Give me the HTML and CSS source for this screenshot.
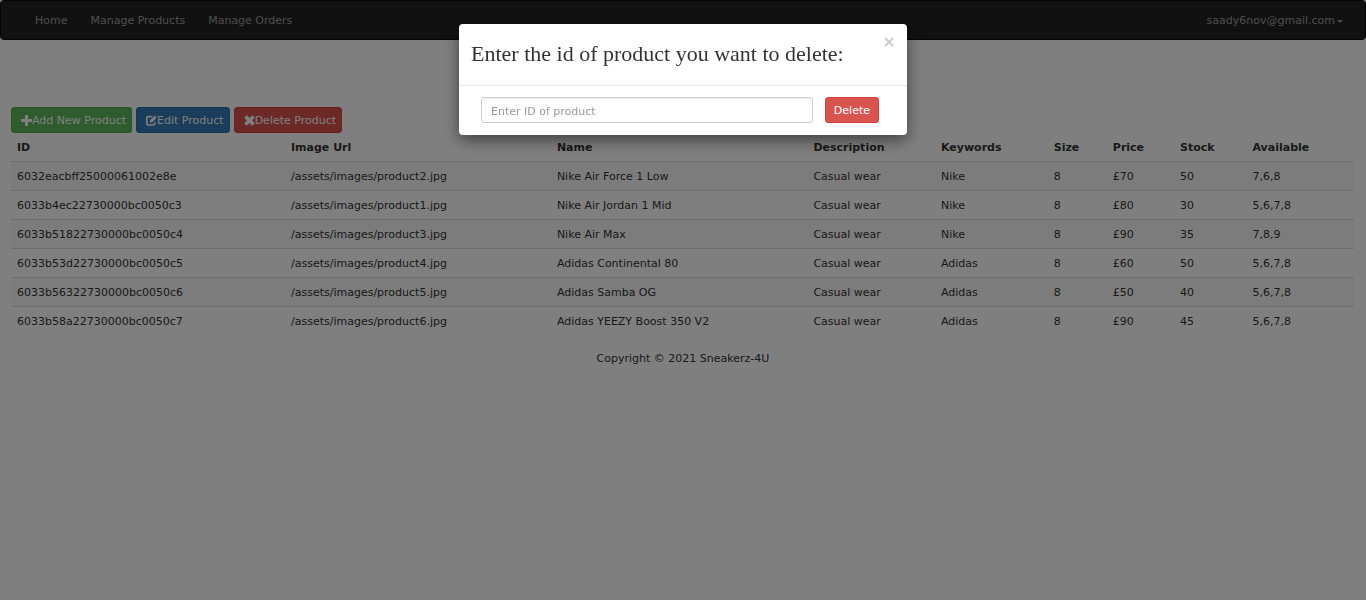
FILE: index.html
```html
<!DOCTYPE html>
<html lang="en">
<head>
<meta charset="utf-8">
<meta name="viewport" content="width=device-width, initial-scale=1">
<title>Manage Products</title>
<link rel="stylesheet" href="styles.css">
</head>
<body>
<nav class="navbar">
  <ul class="nav">
    <li><a href="#">Home</a></li>
    <li><a href="#">Manage Products</a></li>
    <li><a href="#">Manage Orders</a></li>
  </ul>
  <a class="account" href="#">saady6nov@gmail.com<span class="caret"></span></a>
</nav>
<main class="content">
  <div class="toolbar">
    <button class="btn btn-add" type="button"><svg class="icon" viewBox="0 0 11 11" aria-hidden="true"><path d="M4 0h3v4h4v3H7v4H4V7H0V4h4z"/></svg>Add New Product</button>
    <button class="btn btn-edit" type="button"><svg class="icon" viewBox="0 0 11 11" aria-hidden="true"><path d="M7 .8H2Q0 .8 0 2.800v6Q0 10.800 2 10.800h5.500q2 0 2-2V6.300L7.800 8v1.200H1.700V2.500h3.700zM3.700 7.800l.6-2.800L8.200 1.100l2.100 2.100-3.900 3.900zM8.900.5l.5-.5L11 1.900l-.4.7z"/></svg>Edit Product</button>
    <button class="btn btn-delete" type="button"><svg class="icon" viewBox="0 0 11 11" aria-hidden="true"><path d="M2.700.2 5.500 2.900 8.300.2l2.500 2.500L8.100 5.500l2.700 2.800-2.500 2.500-2.800-2.700-2.800 2.700L.2 8.300l2.700-2.800L.2 2.700z"/></svg>Delete Product</button>
  </div>
  <table class="products">
    <colgroup>
      <col class="col-id"><col class="col-image"><col class="col-name"><col class="col-description"><col class="col-keywords"><col class="col-size"><col class="col-price"><col class="col-stock"><col class="col-available">
    </colgroup>
    <thead>
      <tr><th>ID</th><th>Image Url</th><th>Name</th><th>Description</th><th>Keywords</th><th>Size</th><th>Price</th><th>Stock</th><th>Available</th></tr>
    </thead>
    <tbody>
      <tr><td>6032eacbff25000061002e8e</td><td>/assets/images/product2.jpg</td><td>Nike Air Force 1 Low</td><td>Casual wear</td><td>Nike</td><td>8</td><td>£70</td><td>50</td><td>7,6,8</td></tr>
      <tr><td>6033b4ec22730000bc0050c3</td><td>/assets/images/product1.jpg</td><td>Nike Air Jordan 1 Mid</td><td>Casual wear</td><td>Nike</td><td>8</td><td>£80</td><td>30</td><td>5,6,7,8</td></tr>
      <tr><td>6033b51822730000bc0050c4</td><td>/assets/images/product3.jpg</td><td>Nike Air Max</td><td>Casual wear</td><td>Nike</td><td>8</td><td>£90</td><td>35</td><td>7,8,9</td></tr>
      <tr><td>6033b53d22730000bc0050c5</td><td>/assets/images/product4.jpg</td><td>Adidas Continental 80</td><td>Casual wear</td><td>Adidas</td><td>8</td><td>£60</td><td>50</td><td>5,6,7,8</td></tr>
      <tr><td>6033b56322730000bc0050c6</td><td>/assets/images/product5.jpg</td><td>Adidas Samba OG</td><td>Casual wear</td><td>Adidas</td><td>8</td><td>£50</td><td>40</td><td>5,6,7,8</td></tr>
      <tr><td>6033b58a22730000bc0050c7</td><td>/assets/images/product6.jpg</td><td>Adidas YEEZY Boost 350 V2</td><td>Casual wear</td><td>Adidas</td><td>8</td><td>£90</td><td>45</td><td>5,6,7,8</td></tr>
    </tbody>
  </table>
</main>
<footer class="footer">Copyright © 2021 Sneakerz-4U</footer>
<div class="backdrop">
  <div class="modal" role="dialog" aria-modal="true" aria-labelledby="modal-title">
    <header class="modal-header">
      <h2 class="modal-title" id="modal-title">Enter the id of product you want to delete:</h2>
      <button class="close" type="button" aria-label="Close"><svg class="close-icon" viewBox="0 0 10 10" aria-hidden="true"><path d="M1 1l8 8M9 1L1 9"/></svg></button>
    </header>
    <form class="modal-body">
      <input class="field" type="text" placeholder="Enter ID of product" aria-label="Product ID">
      <button class="btn btn-delete btn-submit" type="button">Delete</button>
    </form>
  </div>
</div>
</body>
</html>
```

FILE: styles.css
```css
* {
  box-sizing: border-box;
}

body {
  margin: 0;
  color: #333;
  background: #fff;
  font: 11px/16px Verdana, "DejaVu Sans", sans-serif;
}

.navbar {
  display: flex;
  justify-content: space-between;
  height: 40px;
  padding: 0 22px 0 24px;
  border: 1px solid #080808;
  border-radius: 4px;
  background: #222;
}

.nav {
  display: flex;
  margin: 0;
  padding: 0;
  list-style: none;
}

.nav a,
.account {
  display: flex;
  align-items: center;
  height: 38px;
  padding-top: 2px;
  color: #9d9d9d;
  text-decoration: none;
}

.nav a {
  padding-right: 13px;
  padding-left: 10px;
}

.caret {
  margin-left: 2px;
  border-top: 3px solid;
  border-right: 3px solid transparent;
  border-left: 3px solid transparent;
}

.content {
  padding: 67px 12px 0 11px;
}

.toolbar {
  display: flex;
  gap: 4px;
}

.btn {
  display: flex;
  align-items: center;
  height: 26px;
  padding: 2px 5px 0 9px;
  border: 1px solid;
  border-radius: 3px;
  color: #fff;
  font: inherit;
  white-space: nowrap;
}

.btn-add {
  border-color: #4cae4c;
  background: #5cb85c;
}

.btn-edit {
  border-color: #2e6da4;
  background: #337ab7;
}

.btn-delete {
  border-color: #d43f3a;
  background: #d9534f;
}

.btn-submit {
  padding: 2px 8px 0;
}

.icon {
  width: 11px;
  height: 11px;
  margin-bottom: 2px;
  fill: currentColor;
}

.products {
  width: 100%;
  border-collapse: collapse;
  table-layout: fixed;
}

.col-id { width: 20.4%; }
.col-image { width: 19.8%; }
.col-name { width: 19.1%; }
.col-description { width: 9.5%; }
.col-keywords { width: 8.4%; }
.col-size { width: 4.4%; }
.col-price { width: 5%; }
.col-stock { width: 5.4%; }
.col-available { width: 8%; }

.products th,
.products td {
  padding: 7px 6px 5px;
  text-align: left;
  white-space: nowrap;
}

.products td {
  border-top: 1px solid #ddd;
}

.products tbody tr:nth-child(odd) {
  background: #f9f9f9;
}

.footer {
  margin-top: 16px;
  text-align: center;
}

.backdrop {
  position: fixed;
  inset: 0;
  padding: 24px 12px;
  background: rgba(0, 0, 0, 0.5);
}

.modal {
  max-width: 448px;
  margin: 0 auto;
  border-radius: 4px;
  background: #fff;
  box-shadow: 0 5px 15px rgba(0, 0, 0, 0.5);
}

.modal-header {
  display: flex;
  align-items: flex-start;
  justify-content: space-between;
  padding: 12px 12px 19px;
  border-bottom: 1px solid #e5e5e5;
}

.modal-title {
  margin: 6px 0 0;
  color: #333;
  font: 22px/24px "Times New Roman", "Liberation Serif", serif;
}

.close {
  display: flex;
  padding: 1px;
  border: 0;
  background: none;
}

.close-icon {
  width: 10px;
  height: 10px;
  fill: none;
  stroke: #ccc;
  stroke-width: 2;
}

.modal-body {
  display: flex;
  gap: 12px;
  padding: 11px 28px 12px 22px;
}

.field {
  flex: 1;
  min-width: 0;
  height: 26px;
  padding: 2px 9px 0;
  border: 1px solid #ccc;
  border-radius: 3px;
  color: #555;
  background: #fff;
  box-shadow: inset 0 1px 1px rgba(0, 0, 0, 0.075);
  font: inherit;
}

.field::placeholder {
  color: #999;
  opacity: 1;
}
```
